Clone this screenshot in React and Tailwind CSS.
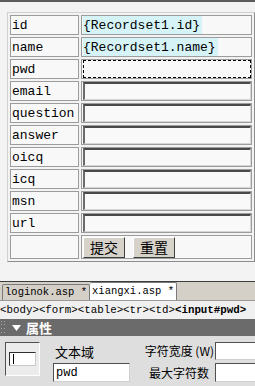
const mono = { fontFamily: '"Liberation Mono", "Noto Sans CJK SC", monospace' };

const rows = [
  { label: 'id', bound: '{Recordset1.id}' },
  { label: 'name', bound: '{Recordset1.name}' },
  { label: 'pwd', selected: true },
  { label: 'email' },
  { label: 'question' },
  { label: 'answer' },
  { label: 'oicq' },
  { label: 'icq' },
  { label: 'msn' },
  { label: 'url' },
];

function Field({ selected }) {
  if (selected) {
    return <div className="h-[18px] w-[168px] border border-dashed border-black bg-[#f9f9f9]" />;
  }
  return (
    <div className="h-[18px] w-[168px] border-t-2 border-l-2 border-r border-b border-t-[#4a4a4a] border-l-[#6a6a6a] border-r-[#d6d6d6] border-b-[#d6d6d6] bg-[#f9f9f9]" />
  );
}

function Btn({ children }) {
  return (
    <div className="flex h-[21px] w-[42px] items-center justify-center border border-t-white border-l-white border-r-[#404040] border-b-[#404040] bg-[#d6d2ca] text-[14px] leading-none text-black font-['Noto_Sans_CJK_SC',sans-serif]">
      {children}
    </div>
  );
}

export default function App() {
  return (
    <div className="flex h-[386px] w-[255px] flex-col overflow-hidden bg-[#f3f3f3]" style={mono}>
      <div className="h-[2px] bg-[#5c5c5c]" />

      {/* form table */}
      <div className="ml-[7px] mt-[10px] w-[248px] border border-t-[#d0d0d0] border-l-[#d0d0d0] border-r-[#8c8c8c] border-b-[#8c8c8c] p-[2px]">
        <div className="grid grid-cols-[69px_171px] gap-[2px]">
          {rows.map((r) => (
            <div key={r.label} className="contents">
              <div className="flex h-[20px] items-center border border-[#9c9c9c] bg-[#f8f8f8] pl-[1px] text-[13px] leading-none text-black">
                {r.label}
              </div>
              <div className="flex h-[20px] items-center border border-[#9c9c9c] bg-[#f8f8f8] pl-[1px] text-[13px] leading-none text-black">
                {r.bound ? (
                  <span className="flex h-[18px] items-center bg-[#d6f3f7] pr-[2px]">{r.bound}</span>
                ) : (
                  <Field selected={r.selected} />
                )}
              </div>
            </div>
          ))}
          <div className="h-[24px] border border-[#9c9c9c] bg-[#f8f8f8]" />
          <div className="flex h-[24px] items-center gap-[8px] border border-[#9c9c9c] bg-[#f8f8f8] pl-[1px]">
            <Btn>提交</Btn>
            <Btn>重置</Btn>
          </div>
        </div>
      </div>

      <div className="flex-1" />

      {/* document tabs */}
      <div className="h-[1px] bg-[#3c3c3c]" />
      <div className="flex h-[18px] items-end bg-[#d4d0c8] pl-[2px] text-[10.5px] leading-none text-black">
        <div className="flex h-[16px] w-[88px] items-center justify-center rounded-t-[2px] border border-b-0 border-[#7a7a7a] bg-[#d4d0c8]">
          loginok.asp *
        </div>
        <div className="flex h-[18px] w-[87px] items-center justify-center rounded-t-[2px] border border-b-0 border-l-0 border-[#7a7a7a] bg-white">
          xiangxi.asp *
        </div>
      </div>

      {/* tag selector */}
      <div className="flex h-[19px] items-center whitespace-nowrap border-t border-[#9a9a9a] bg-[#f0f0f0] text-[10.8px] leading-none text-black">
        <span>&lt;body&gt;&lt;form&gt;&lt;table&gt;&lt;tr&gt;&lt;td&gt;</span>
        <span className="font-bold">&lt;input#pwd&gt;</span>
      </div>

      {/* properties panel */}
      <div className="flex h-[17px] items-center gap-[5px] bg-[#6b6b6b] text-white">
        <div className="grid h-[14px] w-[5px] grid-cols-2 gap-[1px] pl-[1px]">
          {Array.from({ length: 8 }).map((_, i) => (
            <span key={i} className="h-[1px] w-[1px] bg-[#a8a8a8]" />
          ))}
        </div>
        <svg width="9" height="6" viewBox="0 0 9 6" className="ml-[2px]">
          <path d="M0 0 H9 L4.5 6 Z" fill="#fff" />
        </svg>
        <span className="text-[13px] font-bold leading-none font-['Noto_Sans_CJK_SC',sans-serif]">属性</span>
      </div>

      <div className="flex h-[50px] bg-[#dedede] pl-[5px] pt-[6px]">
        <div className="flex h-[34px] w-[35px] shrink-0 items-center justify-center border border-t-[#505050] border-l-[#505050] border-r-white border-b-white bg-[#ececec]">
          <div className="flex h-[14px] w-[27px] items-center border border-t-[#303030] border-l-[#303030] border-r-[#c8c8c8] border-b-[#c8c8c8] bg-white pl-[3px]">
            <span className="h-[10px] w-[1px] bg-black" />
          </div>
        </div>
        <div className="ml-[13px] flex w-[77px] shrink-0 flex-col">
          <div className="flex h-[18px] items-center pl-[2px] text-[13px] leading-none text-black font-['Noto_Sans_CJK_SC',sans-serif]">
            文本域
          </div>
          <div className="mt-[3px] flex h-[19px] items-center border border-t-[#505050] border-l-[#505050] border-r-[#cfcfcf] border-b-[#cfcfcf] bg-white pl-[2px] text-[12px] leading-none text-black">
            pwd
          </div>
        </div>
        <div className="ml-[10px] flex w-[74px] shrink-0 flex-col items-end whitespace-nowrap text-[12px] leading-none text-black font-['Noto_Sans_CJK_SC',sans-serif]">
          <div className="flex h-[18px] items-center">字符宽度 (W)</div>
          <div className="mt-[3px] flex h-[19px] items-center pr-[5px]">最大字符数</div>
        </div>
        <div className="ml-[1px] flex flex-1 flex-col">
          <div className="h-[18px] border border-t-[#505050] border-l-[#505050] border-r-0 border-b-[#cfcfcf] bg-white" />
          <div className="mt-[3px] h-[19px] border border-t-[#505050] border-l-[#505050] border-r-0 border-b-[#cfcfcf] bg-white" />
        </div>
      </div>
    </div>
  );
}
